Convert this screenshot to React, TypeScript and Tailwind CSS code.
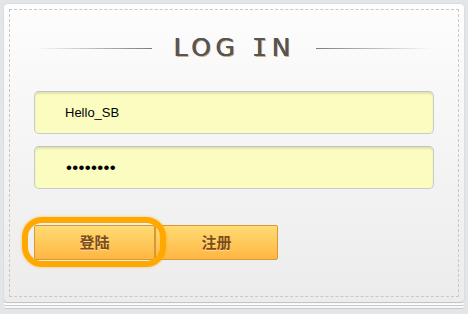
import React from "react";

const cjk = { fontFamily: '"Noto Sans CJK SC", "Noto Sans", sans-serif' };

function Field({ children }: { children: React.ReactNode }) {
  return (
    <div className="h-[43px] rounded-[5px] border border-[#cacaca] border-t-[#c2c2c2] bg-[#fbfdc0] shadow-[inset_0_2px_2px_rgba(0,0,0,0.10)] flex items-center pl-[30px]">
      {children}
    </div>
  );
}

export default function App() {
  return (
    <div className="w-[468px] h-[314px] bg-[#e3e6e9] pt-[4px] px-[4px] overflow-hidden">
      <div className="relative w-[460px] h-[299px] rounded-[4px] bg-gradient-to-b from-[#fdfdfd] to-[#ececec] border-b border-[#c4c4c4] shadow-[0_0_2px_rgba(0,0,0,0.12)] p-[5px]">
        <div className="h-full border border-dashed border-[#c8c8c8] rounded-[1px]">
          {/* title */}
          <div className="mt-[23px] h-[30px] flex items-center justify-center gap-[21px]">
            <div className="w-[116px] h-px bg-gradient-to-r from-transparent to-[#7c7c7c]" />
            <div
              className="text-[25px] leading-[30px] tracking-[4.6px] text-[#555] [text-shadow:0.6px_0_0_#555,1.4px_1px_0_#d6ad78]"
              style={{ fontFamily: '"DejaVu Sans", Verdana, sans-serif' }}
            >
              LOG{" "}
              <span style={{ fontFamily: '"DejaVu Sans Mono", monospace' }}>I</span>N
            </div>
            <div className="w-[116px] h-px bg-gradient-to-r from-[#7c7c7c] to-transparent" />
          </div>

          {/* fields */}
          <div className="mt-[28px] px-[24px] flex flex-col gap-[12px]">
            <Field>
              <span
                className="text-[13px] text-black"
                style={{ fontFamily: '"Liberation Sans", Arial, sans-serif' }}
              >
                Hello_SB
              </span>
            </Field>
            <Field>
              <span
                className="text-[17px] tracking-[0.3px] text-black leading-none pl-px"
                style={{ fontFamily: '"Liberation Sans", Arial, sans-serif' }}
              >
                ••••••••
              </span>
            </Field>
          </div>

          {/* buttons */}
          <div className="mt-[36px] px-[24px] flex">
            <div className="relative">
              <button
                className="w-[121px] h-[35px] rounded-[2px] border border-[#d59a37] bg-gradient-to-b from-[#ffdb72] to-[#ffb642] text-[15px] font-bold text-[#7e4c14] [text-shadow:0_1px_0_rgba(255,255,255,0.45)]"
                style={cjk}
              >
                登陆
              </button>
              <div className="absolute left-[-12px] right-[-11px] top-[-8px] bottom-[-7px] rounded-[20px] border-[6px] border-[#ffa800] blur-[0.7px] shadow-[0_0_3px_rgba(255,160,0,0.6)] pointer-events-none" />
            </div>
            <button
              className="w-[123px] h-[35px] rounded-[2px] border border-[#d59a37] bg-gradient-to-b from-[#ffdb72] to-[#ffb642] text-[15px] font-bold text-[#7e4c14] [text-shadow:0_1px_0_rgba(255,255,255,0.45)]"
              style={cjk}
            >
              注册
            </button>
          </div>
        </div>
      </div>
      <div className="w-[460px] h-[3px] bg-white border-b border-[#c6c6c6] rounded-b-[2px]" />
      <div className="w-[460px] h-[3px] bg-[#fafafa] border-b border-[#c9c9c9] rounded-b-[2px]" />
    </div>
  );
}
